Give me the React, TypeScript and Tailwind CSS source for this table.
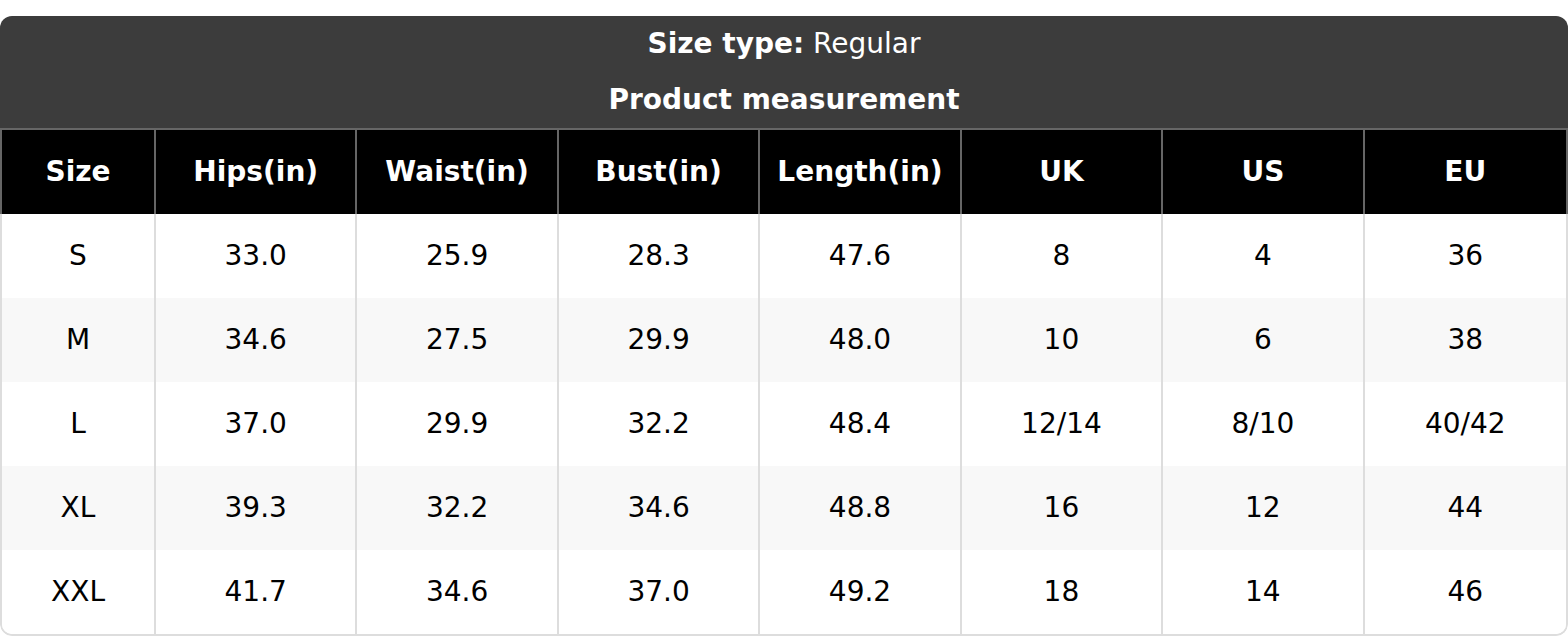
const columns = ['Size', 'Hips(in)', 'Waist(in)', 'Bust(in)', 'Length(in)', 'UK', 'US', 'EU'];

const rows = [
  ['S', '33.0', '25.9', '28.3', '47.6', '8', '4', '36'],
  ['M', '34.6', '27.5', '29.9', '48.0', '10', '6', '38'],
  ['L', '37.0', '29.9', '32.2', '48.4', '12/14', '8/10', '40/42'],
  ['XL', '39.3', '32.2', '34.6', '48.8', '16', '12', '44'],
  ['XXL', '41.7', '34.6', '37.0', '49.2', '18', '14', '46'],
];

export default function App() {
  return (
    <div className="w-[1568px] h-[636px] bg-white pt-4" style={{ fontFamily: '"DejaVu Sans", sans-serif' }}>
      <div className="rounded-[12px] overflow-hidden">
        {/* Title */}
        <div className="bg-[#3c3c3c] text-white text-[28px] text-center">
          <div className="h-14 leading-[56px]">
            <span className="font-bold">Size type:</span> Regular
          </div>
          <div className="h-14 leading-[56px] font-bold">Product measurement</div>
        </div>

        {/* Column headers */}
        <div className="grid grid-cols-[154px_repeat(7,minmax(0,1fr))] bg-black border-t-2 border-x-2 border-[#666]">
          {columns.map((col, i) => (
            <div
              key={col}
              className={`h-[84px] flex items-center justify-center text-white text-[28px] font-bold ${
                i < columns.length - 1 ? 'border-r-2 border-[#666]' : ''
              }`}
            >
              {col}
            </div>
          ))}
        </div>

        {/* Body */}
        <div className="border-x-2 border-b-2 border-[#ddd] rounded-b-[12px] overflow-hidden">
          {rows.map((row, r) => (
            <div
              key={row[0]}
              className={`grid grid-cols-[154px_repeat(7,minmax(0,1fr))] ${r % 2 === 1 ? 'bg-[#f8f8f8]' : 'bg-white'}`}
            >
              {row.map((cell, i) => (
                <div
                  key={i}
                  className={`h-[84px] flex items-center justify-center text-[28px] text-black ${
                    i < row.length - 1 ? 'border-r-2 border-[#ddd]' : ''
                  }`}
                >
                  {cell}
                </div>
              ))}
            </div>
          ))}
        </div>
      </div>
    </div>
  );
}
